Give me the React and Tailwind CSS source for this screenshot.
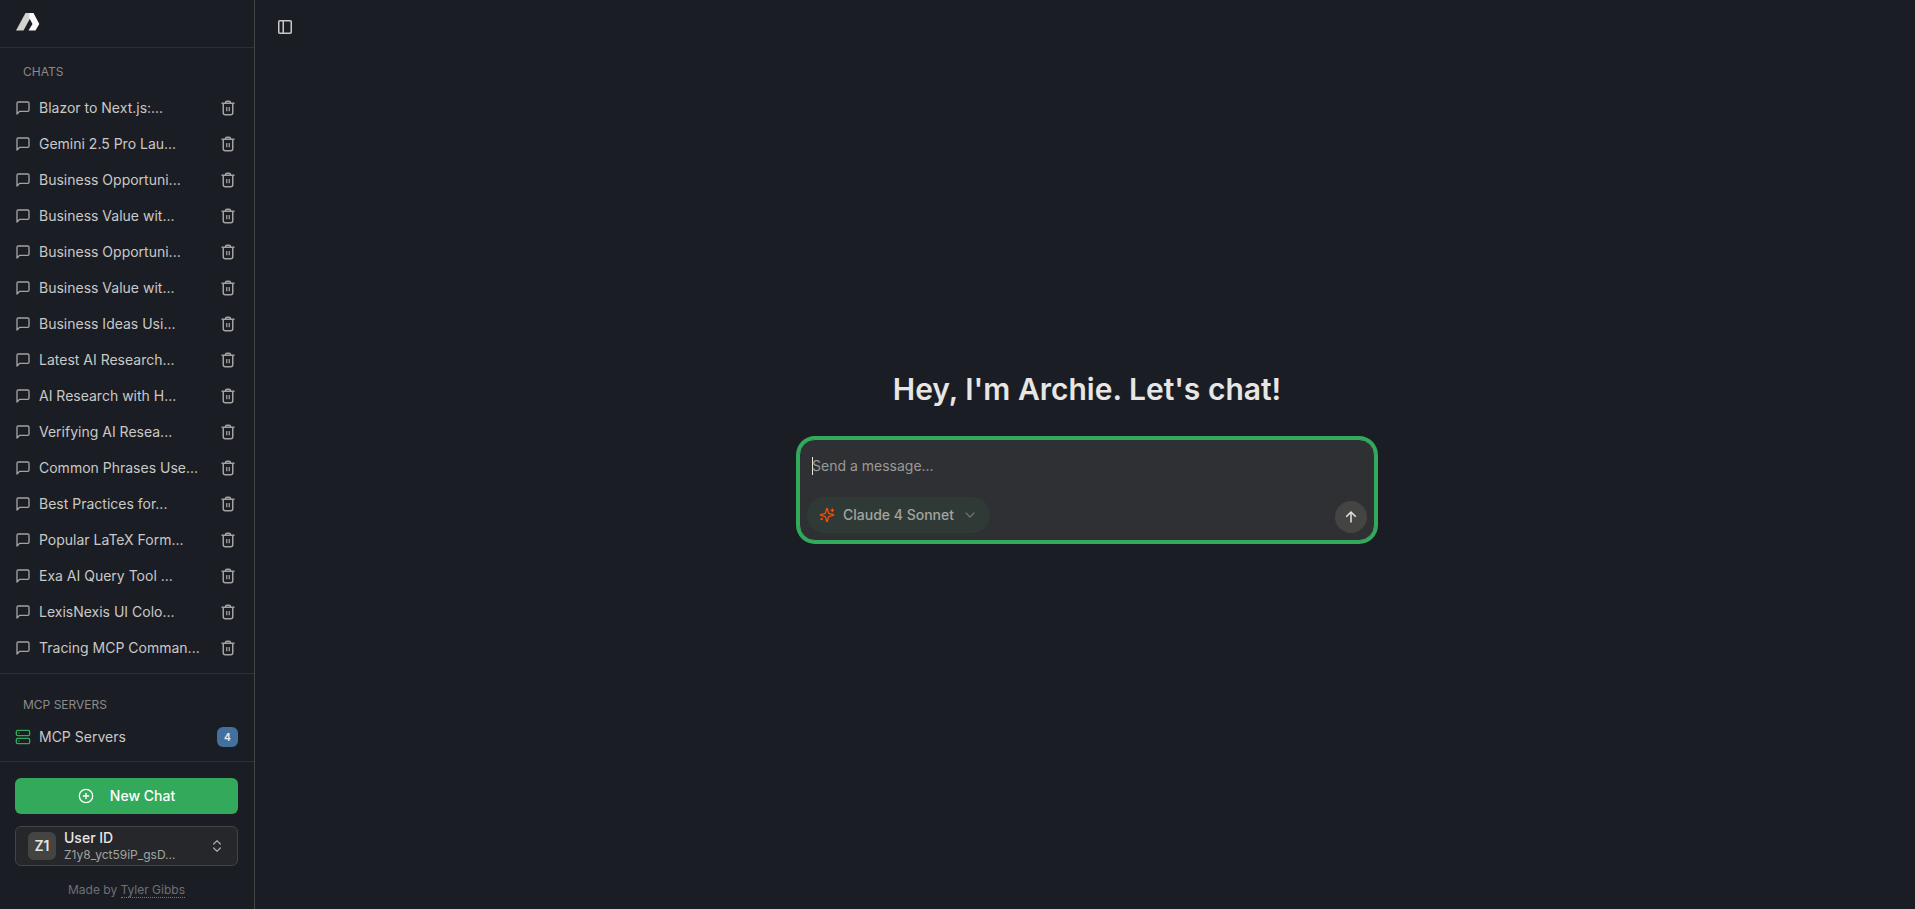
import React, { useState } from 'react';
import { ChevronDown, ChevronsUpDown, CirclePlus, Server } from 'lucide-react';

const chats = [
    { id: 1, title: "Blazor to Next.js:..." },
    { id: 2, title: "Gemini 2.5 Pro Lau..." },
    { id: 3, title: "Business Opportuni..." },
    { id: 4, title: "Business Value wit..." },
    { id: 5, title: "Business Opportuni..." },
    { id: 6, title: "Business Value wit..." },
    { id: 7, title: "Business Ideas Usi..." },
    { id: 8, title: "Latest AI Research..." },
    { id: 9, title: "AI Research with H..." },
    { id: 10, title: "Verifying AI Resea..." },
    { id: 11, title: "Common Phrases Use..." },
    { id: 12, title: "Best Practices for..." },
    { id: 13, title: "Popular LaTeX Form..." },
    { id: 14, title: "Exa AI Query Tool ..." },
    { id: 15, title: "LexisNexis UI Colo..." },
    { id: 16, title: "Tracing MCP Comman..." },
];

const Logo = () => (
    <svg viewBox="0 0 24 18" className="h-[18px] w-6" aria-hidden="true">
        <path d="M9.5 0H17L7.5 17.5H0Z" fill="#d2d2ce" />
        <path d="M13.5 0H17.5L23.3 11L19.5 17.5H12.5L16.5 11L13 4.5Z" fill="#fafafa" />
    </svg>
);

const ChatIcon = () => (
    <svg
        viewBox="0 0 24 24"
        className="size-4 shrink-0 text-[#a3a3a1]"
        fill="none"
        stroke="currentColor"
        strokeWidth="2"
        strokeLinecap="round"
        strokeLinejoin="round"
        aria-hidden="true"
    >
        <path d="M21 15a2 2 0 0 1-2 2H7l-4 4V5a2 2 0 0 1 2-2h14a2 2 0 0 1 2 2z" />
    </svg>
);

const SparklesIcon = () => (
    <svg
        viewBox="0 0 24 24"
        className="size-4 shrink-0 text-[#f0500a]"
        fill="none"
        stroke="currentColor"
        strokeWidth="2"
        strokeLinecap="round"
        strokeLinejoin="round"
        aria-hidden="true"
    >
        <path d="M9.937 15.5A2 2 0 0 0 8.5 14.063l-6.135-1.582a.5.5 0 0 1 0-.962L8.5 9.936A2 2 0 0 0 9.937 8.5l1.582-6.135a.5.5 0 0 1 .963 0L14.063 8.5A2 2 0 0 0 15.5 9.937l6.135 1.581a.5.5 0 0 1 0 .964L15.5 14.063a2 2 0 0 0-1.437 1.437l-1.582 6.135a.5.5 0 0 1-.963 0z" />
        <path d="M20 3v4" />
        <path d="M22 5h-4" />
        <path d="M4 17v2" />
        <path d="M5 18H3" />
    </svg>
);

// Sharp-cornered 16px icons
const SharpIcon = ({ children }) => (
    <svg
        viewBox="0 0 16 16"
        className="size-4 shrink-0"
        fill="none"
        stroke="currentColor"
        strokeWidth="1.5"
        aria-hidden="true"
    >
        {children}
    </svg>
);

const TrashIcon = () => (
    <SharpIcon>
        <path d="M1.5 3.25h13" />
        <path d="M5.5 3.25v-.5a1.5 1.5 0 0 1 1.5-1.5h2a1.5 1.5 0 0 1 1.5 1.5v.5" />
        <path d="M3.25 3.25v9.5a2 2 0 0 0 2 2h5.5a2 2 0 0 0 2-2v-9.5" />
        <path d="M6.75 7v4.25M9.25 7v4.25" strokeWidth="1.25" />
    </SharpIcon>
);

const PanelIcon = () => (
    <SharpIcon>
        <rect x="1.75" y="1.75" width="12.5" height="12.5" rx="1" />
        <path d="M6.25 1.75v12.5" />
    </SharpIcon>
);

const ArrowUpIcon = () => (
    <SharpIcon>
        <path d="M3.25 7.75L8 3L12.75 7.75" />
        <path d="M8 3v10.5" />
    </SharpIcon>
);

const ChatRow = ({ chat }) => (
    <li className="flex h-9 items-center justify-between pr-[18px] pl-[15px]">
        <a href={`#chat-${chat.id}`} className="flex min-w-0 items-center gap-2 text-sm text-[#c9c9c7]">
            <ChatIcon />
            <span className="whitespace-nowrap">{chat.title}</span>
        </a>
        <button type="button" aria-label={`Delete ${chat.title}`} className="text-[#a3a3a1]">
            <TrashIcon />
        </button>
    </li>
);

const Sidebar = () => (
    <aside className="flex w-[255px] shrink-0 flex-col border-r border-[#444444]">
        <header className="flex h-12 items-start border-b border-[#2d2f33] px-4 pt-[13px]">
            <Logo />
        </header>

        {/* Chat history */}
        <nav aria-label="Chats" className="min-h-0 flex-1 overflow-hidden">
            <h2 className="px-[23px] pt-4 pb-[10px] text-xs leading-4 text-[#8b8b89]">CHATS</h2>
            <ul>
                {chats.map(chat => (
                    <ChatRow key={chat.id} chat={chat} />
                ))}
            </ul>
        </nav>

        {/* MCP servers */}
        <section className="border-y border-[#2d2f33] pt-[23px] pb-2">
            <h2 className="px-[23px] text-xs leading-4 text-[#8b8b89]">MCP SERVERS</h2>
            <button type="button" className="mt-2 flex h-8 w-full items-center gap-2 pr-4 pl-[15px] text-sm text-[#c9c9c7]">
                <Server className="size-4 text-[#33a95b]" />
                <span>MCP Servers</span>
                <span className="ml-auto flex h-5 w-[21px] items-center justify-center rounded-md bg-[#41719c] text-[10px] font-bold text-[#e6e6e4]">
                    4
                </span>
            </button>
        </section>

        <footer className="pt-4 pr-4 pb-[11px] pl-[15px]">
            <button
                type="button"
                className="flex h-9 w-full items-center justify-center gap-4 rounded-md bg-[#33a95b] text-sm font-medium text-white"
            >
                <CirclePlus className="size-4" />
                New Chat
            </button>
            <button
                type="button"
                className="mt-3 flex h-10 w-full items-center gap-2 rounded-md border border-[#444444] bg-[#25272b] px-3 text-left"
            >
                <span className="flex size-7 items-center justify-center rounded-md bg-[#444442] text-sm font-semibold text-[#e6e6e4]">
                    Z1
                </span>
                <span className="flex flex-col">
                    <span className="text-sm leading-[17px] font-medium text-[#e6e6e4]">User ID</span>
                    <span className="text-xs leading-[17px] text-[#a3a3a1]">Z1y8_yct59iP_gsD...</span>
                </span>
                <ChevronsUpDown className="ml-auto size-4 text-[#a3a3a1]" />
            </button>
            <p className="mt-4 text-center text-xs leading-4 text-[#6f7072]">
                Made by{' '}
                <a href="#author" className="border-b border-dotted border-[#7a7a7a]">
                    Tyler Gibbs
                </a>
            </p>
        </footer>
    </aside>
);

const MessageForm = () => {
    const [message, setMessage] = useState("");

    return (
        <form
            onSubmit={e => e.preventDefault()}
            className="w-full max-w-xl rounded-2xl border border-[#33a95b] bg-[#2f3033] p-[7px] ring-3 ring-[#33a95b]"
        >
            <div className="flex items-center px-[5px] pt-[9px] pb-[21px]">
                {/* text caret */}
                <span className="-mr-px h-[18px] w-px bg-[#e6e6e4]" />
                <textarea
                    aria-label="Message"
                    rows={1}
                    value={message}
                    onChange={e => setMessage(e.target.value)}
                    placeholder="Send a message..."
                    className="h-5 flex-1 resize-none bg-transparent text-sm leading-5 text-[#e6e6e4] outline-none placeholder:text-[#9a9a98]"
                />
            </div>
            <div className="flex items-end justify-between">
                <button
                    type="button"
                    className="flex h-9 items-center gap-2 rounded-full bg-[#2f3a36] px-3 text-sm font-medium text-[#a3a3a1]"
                >
                    <SparklesIcon />
                    Claude 4 Sonnet
                    <ChevronDown className="size-4 text-[#6b716e]" />
                </button>
                <button
                    type="submit"
                    aria-label="Send message"
                    className="flex size-8 items-center justify-center rounded-full bg-[#444442] text-[#e6e6e4]"
                >
                    <ArrowUpIcon />
                </button>
            </div>
        </form>
    );
};

export default function App() {
    return (
        <div className="flex h-screen bg-[#1b1d24] font-['Inter','Liberation_Sans',sans-serif] text-[#e6e6e4]">
            <Sidebar />
            <main className="flex min-w-0 flex-1 flex-col pl-1">
                <div className="flex h-12 items-start px-[18px] pt-[19px]">
                    <button type="button" aria-label="Toggle sidebar" className="text-[#c9c9c7]">
                        <PanelIcon />
                    </button>
                </div>
                <div className="flex flex-1 flex-col items-center justify-center pb-[45px]">
                    <h1 className="mb-8 text-3xl font-semibold">Hey, I'm Archie. Let's chat!</h1>
                    <MessageForm />
                </div>
            </main>
        </div>
    );
}
